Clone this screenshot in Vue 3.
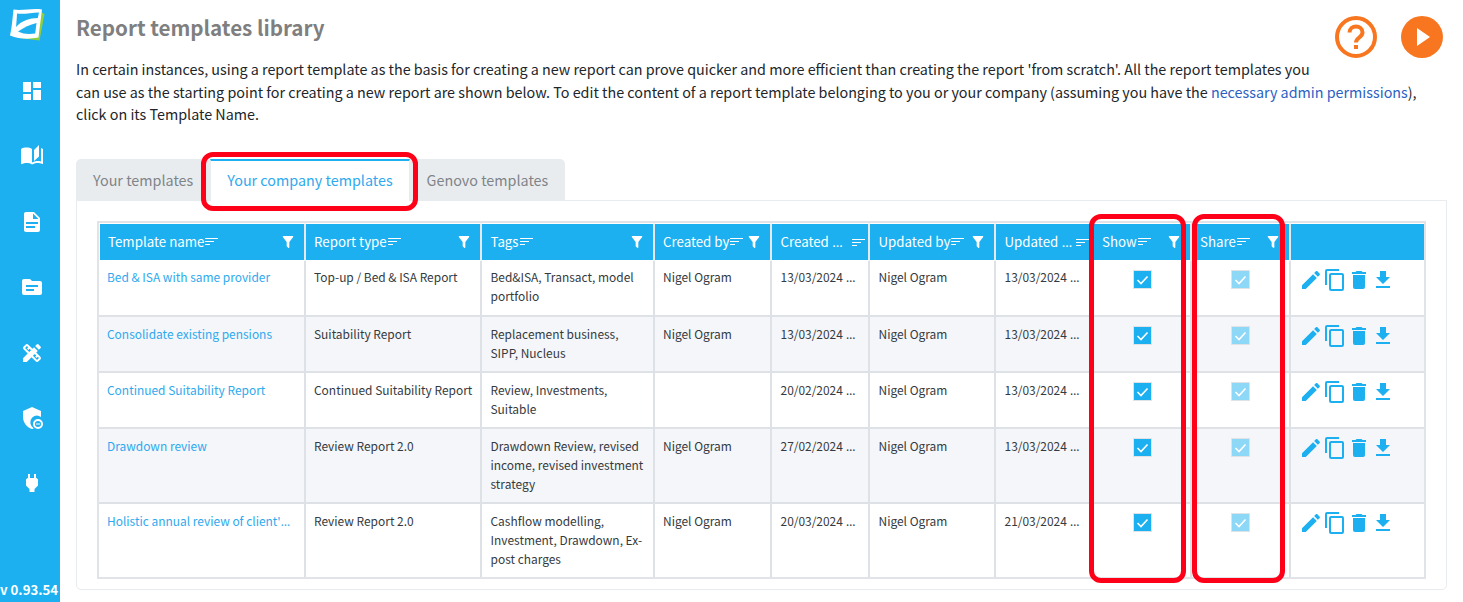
<template>
  <div class="page">
    <aside class="sidebar">
      <svg class="logo" viewBox="9 8 36 34" width="36" height="34">
        <path d="M41 12 L44.5 14 L39.5 40.5 L16 37.5 L37 36 Z" fill="#8fce3c" />
        <path d="M13.5 9.5 C22 11 32 8 42 9.5 C41 18 39.5 28 38.5 37.5 C29 39.5 19 39 10 35.5 C12 27 12.5 18 13.5 9.5 Z" fill="#fff" />
        <path d="M17 13.5 C23 14.5 31 13 39 12.5 L37.8 18 C30 18 21 21 16 27 C16.5 22 16.8 18 17 13.5 Z" fill="#1cb0f0" />
        <path d="M18 31.5 C24 27.5 30 24.5 36.5 23 L35.2 33.5 C29 34.5 23 34 18 31.5 Z" fill="#1cb0f0" />
      </svg>
      <nav class="side-nav">
        <svg v-for="icon in sideIcons" :key="icon" class="side-icon" viewBox="0 0 24 24"><path :d="icon" /></svg>
      </nav>
      <div class="version">v 0.93.54</div>
    </aside>

    <main class="content">
      <div class="help">
        <svg viewBox="0 0 42 42" width="42" height="42">
          <circle cx="21" cy="21" r="19" fill="none" stroke="#f7761f" stroke-width="4" />
          <path d="M14.5 16.5 C14.5 8.5 27.5 8.5 27.5 16.5 C27.5 21.5 21 21.5 21 26.5" fill="none" stroke="#f7761f" stroke-width="4" />
          <rect x="19" y="29" width="4" height="4" fill="#f7761f" />
        </svg>
        <svg viewBox="0 0 42 42" width="42" height="42">
          <circle cx="21" cy="21" r="21" fill="#f7761f" />
          <path d="M16 12 L29 21 L16 30 Z" fill="#fff" />
        </svg>
      </div>
      <h1>Report templates library</h1>
      <p class="intro">
        In certain instances, using a report template as the basis for creating a new report can prove quicker and more efficient than creating the report 'from scratch'. All the report templates you can use as the starting point for creating a new report are shown below. To edit the content of a report template belonging to you or your company (assuming you have the <a href="#">necessary admin permissions</a>), click on its Template Name.
      </p>

      <div class="tabs">
        <div class="tab">Your templates</div>
        <div class="tab active">Your company templates</div>
        <div class="tab">Genovo templates</div>
      </div>

      <section class="card">
        <table>
          <colgroup>
            <col v-for="w in colWidths" :key="w.id" :style="{ width: w.px + 'px' }" />
          </colgroup>
          <thead>
            <tr>
              <th v-for="col in columns" :key="col.label">
                <div class="th-inner" :class="{ dated: col.dated }">
                  <span class="th-label">{{ col.label }}<span v-if="col.dated" class="dots"> …</span></span>
                  <span class="sort"><i></i><i></i><i></i></span>
                  <svg v-if="!col.dated" class="filter" viewBox="0 0 24 24"><path :d="filterPath" /></svg>
                </div>
              </th>
              <th></th>
            </tr>
          </thead>
          <tbody>
            <tr v-for="row in rows" :key="row.name">
              <td class="name">{{ row.name }}<span v-if="row.cut" class="dots">…</span></td>
              <td>{{ row.type }}</td>
              <td>{{ row.tags }}</td>
              <td>{{ row.createdBy }}</td>
              <td>{{ row.created }}<span class="dots"> …</span></td>
              <td>Nigel Ogram</td>
              <td>{{ row.updated }}<span class="dots"> …</span></td>
              <td class="check"><span class="box"><svg viewBox="0 0 17 17"><path d="M3.5 9 L7 12.5 L13.5 5.5" /></svg></span></td>
              <td class="check"><span class="box off"><svg viewBox="0 0 17 17"><path d="M3.5 9 L7 12.5 L13.5 5.5" /></svg></span></td>
              <td class="actions">
                <div class="action-row">
                  <svg v-for="a in actionIcons" :key="a" viewBox="0 0 24 24"><path :d="a" /></svg>
                </div>
              </td>
            </tr>
          </tbody>
        </table>
      </section>
    </main>

    <div class="mark mark-tab"></div>
    <div class="mark mark-show"></div>
    <div class="mark mark-share"></div>
  </div>
</template>

<script setup>
const filterPath = 'M14,12V19.88C14.04,20.18 13.94,20.5 13.71,20.71C13.32,21.1 12.69,21.1 12.3,20.71L10.29,18.7C10.06,18.47 9.96,18.16 10,17.87V12H9.97L4.21,4.62C3.87,4.19 3.95,3.56 4.38,3.22C4.57,3.08 4.78,3 5,3H19C19.22,3 19.43,3.08 19.62,3.22C20.05,3.56 20.13,4.19 19.79,4.62L14.03,12H14Z'

const sideIcons = [
  'M13,3V9H21V3M13,21H21V11H13M3,21H11V15H3M3,13H11V3H3V13Z',
  'M19 1L14 6V17L19 12.5V1M1 5V19.65C1 19.9 1.25 20.15 1.5 20.15C1.6 20.15 1.65 20.1 1.75 20.1C3.1 19.45 5.05 19 6.5 19C8.45 19 10.55 19.4 12 20.5C13.35 19.65 15.8 19 17.5 19C19.15 19 20.85 19.3 22.25 20.05C22.35 20.1 22.4 20.1 22.5 20.1C22.75 20.1 23 19.85 23 19.6V5C22.4 4.55 21.75 4.25 21 4V17.5C19.9 17.15 18.7 17 17.5 17C15.8 17 13.35 17.65 12 18.5V5C10.55 3.9 8.45 3.5 6.5 3.5C4.55 3.5 2.45 3.9 1 5Z',
  'M13,9H18.5L13,3.5V9M6,2H14L20,8V20A2,2 0 0,1 18,22H6C4.89,22 4,21.1 4,20V4C4,2.89 4.89,2 6,2M15,18V16H6V18H15M18,14V12H6V14H18Z',
  'M20,6H12L10,4H4A2,2 0 0,0 2,6V18A2,2 0 0,0 4,20H20A2,2 0 0,0 22,18V8A2,2 0 0,0 20,6M6,10H18V12H6V10M6,14H14V16H6V14Z',
  'M16.24,11.51l1.57-1.57l-3.75-3.75l-1.57,1.57L8.35,3.63c-0.78-0.78-2.05-0.78-2.83,0l-1.9,1.9c-0.78,0.78-0.78,2.05,0,2.83l4.13,4.13L3,17.25V21h3.75l4.76-4.76l4.13,4.13c0.95,0.95,2.23,0.6,2.83,0l1.9-1.9c0.78-0.78,0.78-2.05,0-2.83L16.24,11.51z M9.18,11.07L5.04,6.94l1.89-1.9c0,0,0,0,0,0l1.27,1.27L7.02,7.5l1.41,1.41l1.19-1.19l1.45,1.45L9.18,11.07z M17.06,18.96l-4.13-4.13l1.9-1.9l1.45,1.45l-1.19,1.19l1.41,1.41l1.19-1.19l1.27,1.27L17.06,18.96z M20.71,7.04c0.39-0.39,0.39-1.02,0-1.41l-2.34-2.34c-0.47-0.47-1.12-0.29-1.41,0l-1.83,1.83l3.75,3.75L20.71,7.04z',
  'M12,1L3,5V11C3,16.5 6.8,21.7 12,23C12.6,22.85 13.2,22.65 13.8,22.4A7,7 0 0,1 12.2,11.5A7,7 0 0,1 21,11V5L12,1M18,13A5,5 0 1,0 18,23A5,5 0 1,0 18,13M18,15A3,3 0 1,1 18,21A3,3 0 1,1 18,15M16,17.5V18.5H20V17.5H16Z',
  'M16,7V3H14V7H10V3H8V7C7,7 6,8 6,9V14.5L9.5,18V21H14.5V18L18,14.5V9C18,8 17,7 16,7Z'
]

const actionIcons = [
  'M20.71,7.04C21.1,6.65 21.1,6 20.71,5.63L18.37,3.29C18,2.9 17.35,2.9 16.96,3.29L15.12,5.12L18.87,8.87M3,17.25V21H6.75L17.81,9.93L14.06,6.18L3,17.25Z',
  'M19,21H8V7H19M19,5H8A2,2 0 0,0 6,7V21A2,2 0 0,0 8,23H19A2,2 0 0,0 21,21V7A2,2 0 0,0 19,5M16,1H4A2,2 0 0,0 2,3V17H4V3H16V1Z',
  'M19,4H15.5L14.5,3H9.5L8.5,4H5V6H19M6,19A2,2 0 0,0 8,21H16A2,2 0 0,0 18,19V7H6V19Z',
  'M5,20H19V18H5M19,9H15V3H9V9H5L12,16L19,9Z'
]

const colWidths = [207, 176, 173, 117, 98, 126, 98, 98, 99, 133].map((px, id) => ({ id, px }))

const columns = [
  { label: 'Template name' },
  { label: 'Report type' },
  { label: 'Tags' },
  { label: 'Created by' },
  { label: 'Created', dated: true },
  { label: 'Updated by' },
  { label: 'Updated', dated: true },
  { label: 'Show' },
  { label: 'Share' }
]

const rows = [
  { name: 'Bed & ISA with same provider', type: 'Top-up / Bed & ISA Report', tags: 'Bed&ISA, Transact, model portfolio', createdBy: 'Nigel Ogram', created: '13/03/2024', updated: '13/03/2024' },
  { name: 'Consolidate existing pensions', type: 'Suitability Report', tags: 'Replacement business, SIPP, Nucleus', createdBy: 'Nigel Ogram', created: '13/03/2024', updated: '13/03/2024' },
  { name: 'Continued Suitability Report', type: 'Continued Suitability Report', tags: 'Review, Investments, Suitable', createdBy: '', created: '20/02/2024', updated: '13/03/2024' },
  { name: 'Drawdown review', type: 'Review Report 2.0', tags: 'Drawdown Review, revised income, revised investment strategy', createdBy: 'Nigel Ogram', created: '27/02/2024', updated: '13/03/2024' },
  { name: "Holistic annual review of client'", cut: true, type: 'Review Report 2.0', tags: 'Cashflow modelling, Investment, Drawdown, Ex-post charges', createdBy: 'Nigel Ogram', created: '20/03/2024', updated: '21/03/2024' }
]
</script>

<style>
html,
body {
  margin: 0;
  background: #fff;
}
</style>

<style scoped>
.page {
  position: relative;
  display: flex;
  width: 1463px;
  height: 602px;
  overflow: hidden;
  font-family: "Noto Sans CJK SC", "Noto Sans", sans-serif;
  color: #212529;
}

.sidebar {
  flex: 0 0 60px;
  width: 60px;
  display: flex;
  flex-direction: column;
  align-items: center;
  background: #1cb0f0;
  color: #fff;
}

.logo {
  margin: 8px 0 0 -6px;
  flex: none;
}

.side-nav {
  display: flex;
  flex-direction: column;
  align-items: center;
  gap: 41.4px;
  margin: 37px 0 0 4px;
}

.side-icon {
  width: 24px;
  height: 24px;
  fill: #fff;
}

.version {
  align-self: flex-start;
  margin-top: auto;
  height: 23px;
  line-height: 21px;
  font-size: 13.2px;
  font-weight: 700;
  white-space: nowrap;
}

.content {
  flex: 1;
  padding: 0 16px;
  min-width: 0;
}

.help {
  float: right;
  display: flex;
  gap: 24px;
  margin: 16px 4px 10px 16px;
}

h1 {
  margin: 12px 0 0;
  font-size: 20.6px;
  line-height: 30px;
  font-weight: 700;
  color: #7f7f7f;
}

.intro {
  margin: 16px 0 0;
  font-size: 14.33px;
  line-height: 22.7px;
  color: #212529;
}

.intro a {
  color: #2a5fc4;
  text-decoration: none;
}

.tabs {
  display: flex;
  clear: both;
  margin-top: 32.9px;
  width: fit-content;
  background: #e9ecef;
  border-radius: 5px 5px 0 0;
}

.tab {
  height: 41px;
  line-height: 41px;
  padding: 0 17px;
  font-size: 14.35px;
  color: #7f8489;
  white-space: nowrap;
  box-sizing: border-box;
}

.tab.active {
  background: #fff;
  color: #2ea9ee;
  border-top: 2px solid #1cb0f0;
  border-left: 1px solid #e9ecef;
  border-right: 1px solid #e9ecef;
  padding: 0 16px;
  line-height: 37px;
  height: 42px;
  margin-bottom: -1px;
  position: relative;
}

.card {
  height: 390px;
  box-sizing: border-box;
  border: 1px solid #e9ecef;
  border-radius: 0 0 5px 5px;
  padding: 20px 20px 0;
}

table {
  width: 1329px;
  table-layout: fixed;
  border-collapse: separate;
  border-spacing: 0;
  border: 2px solid #e0e4e8;
  font-size: 11.95px;
  line-height: 19px;
}

th {
  height: 38px;
  box-sizing: border-box;
  padding: 0;
  background: #1cb0f0;
  color: #fff;
  font-weight: 400;
  text-align: left;
  border-right: 2px solid #e6eaee;
  border-top: 1px solid #fff;
  border-bottom: 1px solid #fff;
}

th:first-child {
  border-left: 1px solid #fff;
}

.th-inner {
  display: flex;
  align-items: center;
  padding: 0 8px 1px 8px;
  white-space: nowrap;
}

.th-inner.dated {
  justify-content: space-between;
  padding: 0 3px 0 8.5px;
}

th:nth-child(3) .th-inner,
th:nth-child(6) .th-inner {
  padding-left: 8.5px;
}

.th-label {
  font-size: 13.3px;
}

.dots {
  font-family: "Noto Sans", sans-serif;
}

.sort {
  display: inline-flex;
  flex-direction: column;
  gap: 2px;
  margin-left: 1px;
  flex: none;
}

.sort i {
  display: block;
  height: 1px;
  background: #fff;
  width: 13px;
}

.sort i:nth-child(2) {
  width: 9px;
}

.sort i:nth-child(3) {
  width: 5px;
}

.filter {
  flex: none;
  width: 16px;
  height: 16px;
  fill: #fff;
  margin: 1px 0 0 auto;
}

td {
  padding: 7px 4px 9px 8.5px;
  vertical-align: top;
  border-right: 2px solid #dee2e6;
  border-bottom: 2px solid #dee2e6;
  color: #343a40;
  white-space: normal;
}

tbody tr:first-child td {
  padding-top: 6px;
  padding-bottom: 10px;
}

td:nth-child(1),
td:nth-child(2),
td:nth-child(4) {
  padding-left: 8px;
}

td:nth-child(3) {
  padding-right: 8px;
}

td:nth-child(1),
td:nth-child(5),
td:nth-child(7) {
  white-space: nowrap;
  overflow: hidden;
}

th:last-child,
td:last-child {
  border-right: 0;
}

tbody tr:last-child td {
  border-bottom: 0;
}

tbody tr:nth-child(even) td {
  background: #f4f6fa;
}

.name {
  color: #2ea9ee;
}

tbody tr td.check {
  padding: 8.5px 0 0;
  text-align: center;
}

.box {
  display: inline-block;
  box-sizing: border-box;
  width: 19px;
  height: 19px;
  vertical-align: top;
  background: #1cb0f0;
  border: 1px solid #dfe3e8;
}

.box.off {
  background: #8dd7f7;
}

.box svg {
  display: block;
  width: 17px;
  height: 17px;
  fill: none;
  stroke: #fff;
  stroke-width: 1.6;
}

tbody tr td.actions {
  padding: 7px 0 0 8px;
}

.action-row {
  display: flex;
}

.action-row svg {
  width: 24px;
  height: 24px;
  fill: #1cb0f0;
  flex: none;
}

.mark {
  position: absolute;
  box-sizing: border-box;
  border: 5px solid #ff0019;
  border-radius: 12px;
  pointer-events: none;
}

.mark-tab {
  left: 201px;
  top: 152px;
  width: 217px;
  height: 59px;
}

.mark-show {
  left: 1089px;
  top: 214px;
  width: 97px;
  height: 369px;
}

.mark-share {
  left: 1192px;
  top: 214px;
  width: 93px;
  height: 369px;
}
</style>
